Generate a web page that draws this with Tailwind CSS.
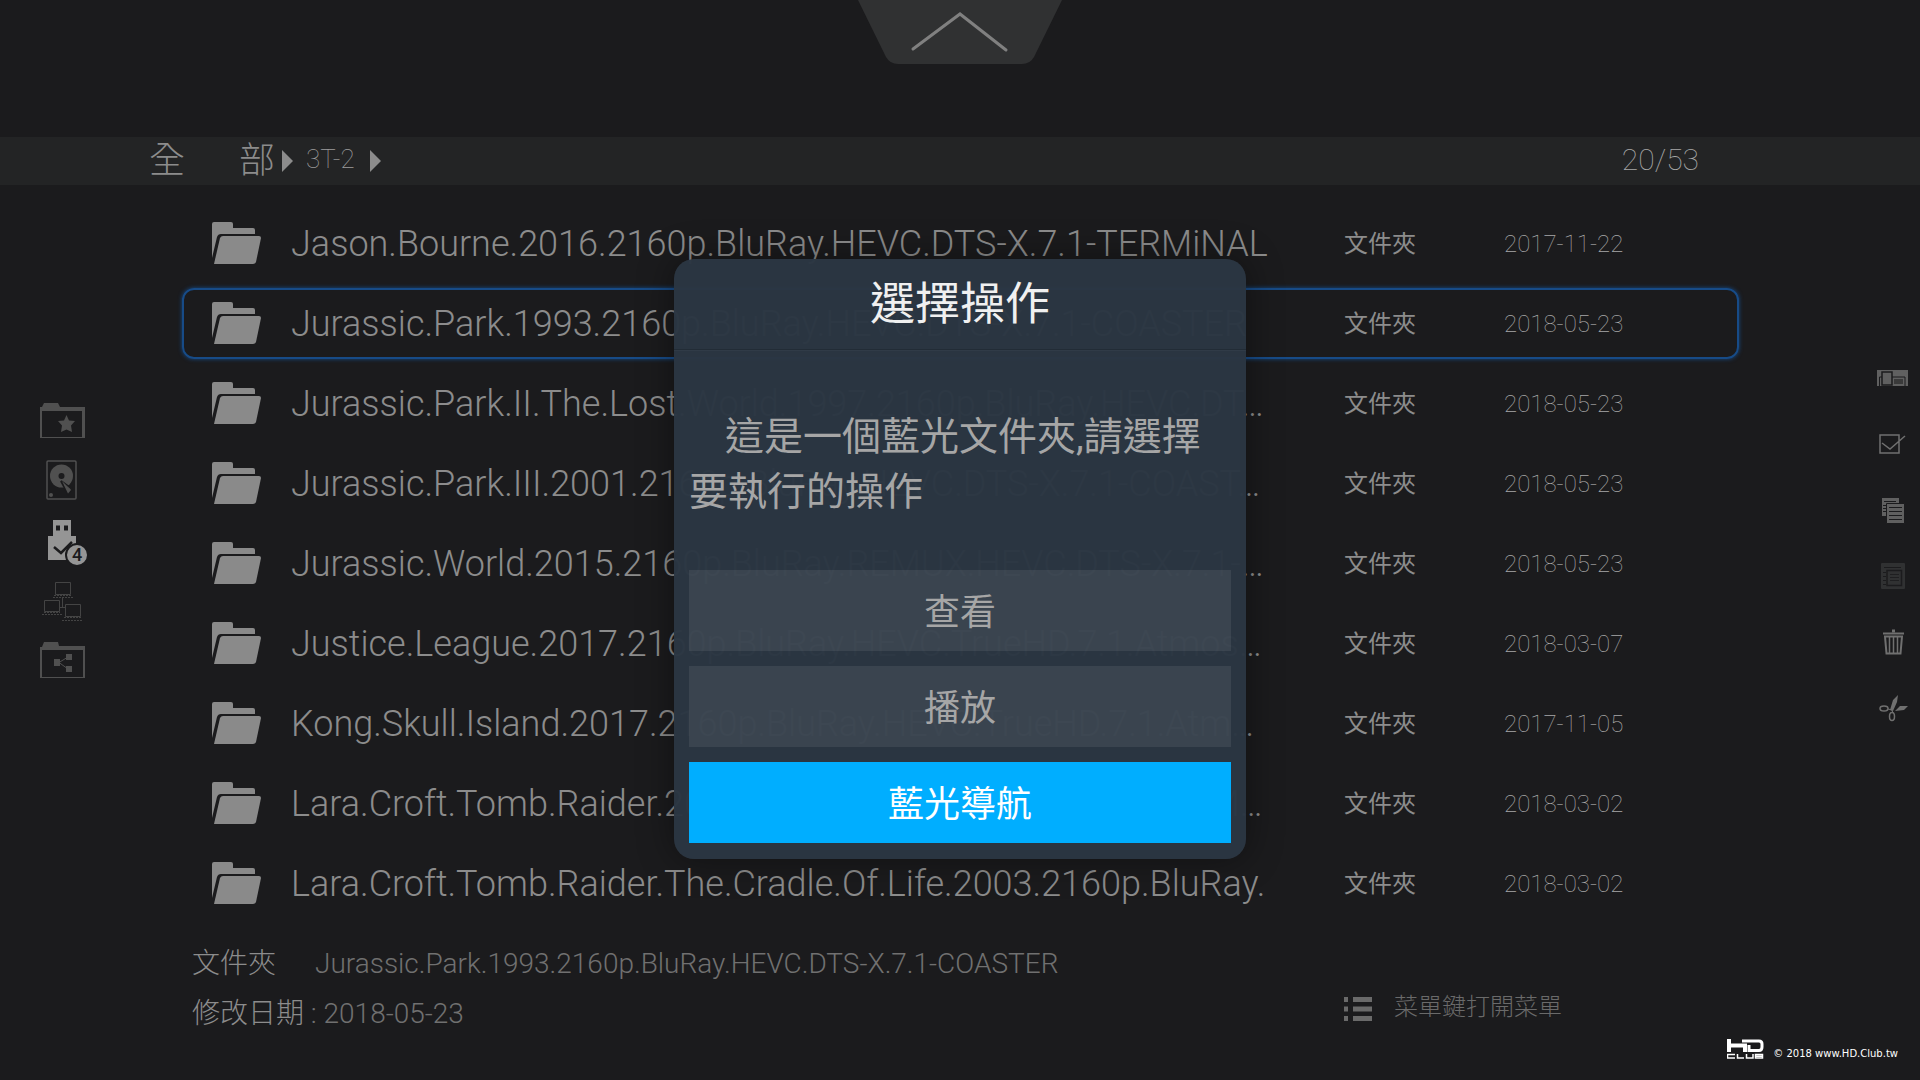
<!DOCTYPE html>
<html lang="zh-Hant">
<head>
    <meta charset="UTF-8">
    <meta name="viewport" content="width=device-width, initial-scale=1.0">
    <title>3T-2</title>
    <script src="https://cdn.jsdelivr.net/npm/@tailwindcss/browser@4"></script>
</head>
<body class="relative min-h-screen overflow-hidden flex flex-col bg-[#1b1b1d] text-[#8c8c8c] font-light font-['Roboto','Noto_Sans_CJK_TC',sans-serif]">
    <!-- Pull-down tab -->
    <header class="h-[137px] flex justify-center items-start">
        <button type="button" aria-label="展開">
            <svg class="block" width="204" height="64" viewBox="0 0 204 64" fill="none">
                <path d="M0 0H204L176 57Q172 64 164 64H40Q32 64 28 57Z" fill="#303132"/>
                <path d="M55 49L102 14L148 50" stroke="#808080" stroke-width="3" stroke-linecap="round"/>
            </svg>
        </button>
    </header>

    <!-- Breadcrumb -->
    <nav class="h-12 pl-[149px] pr-[221px] flex items-center bg-[#232425]">
        <a href="#" class="w-[126px] flex justify-between text-4xl leading-[50px]"><span>全</span><span>部</span></a>
        <svg class="ml-[7px]" width="11" height="22" viewBox="0 0 11 22" fill="#8c8c8c"><path d="M0 0L11 11L0 22Z"/></svg>
        <a href="#" class="ml-[13px] pb-1 text-[26px] font-thin text-[#9c9c9c]">3T-2</a>
        <svg class="ml-[15px]" width="11" height="22" viewBox="0 0 11 22" fill="#8c8c8c"><path d="M0 0L11 11L0 22Z"/></svg>
        <span class="ml-auto pb-1 text-[30px] font-thin text-[#a8a8a8]">20/53</span>
    </nav>

    <!-- File list -->
    <main class="pl-[182px] pr-[181px] pt-[18px]">
        <table class="w-full table-fixed text-left">
            <colgroup>
                <col class="w-[109px]">
                <col>
                <col class="w-[160px]">
                <col class="w-[235px]">
            </colgroup>
            <tbody id="file-list"></tbody>
        </table>
    </main>

    <!-- Details of the selected entry -->
    <footer class="pl-48 pr-[358px] pt-4 flex justify-between text-[28px] leading-[50px]">
        <div>
            <p class="flex"><span class="w-[123px]">文件夾</span><span class="text-[#707070]">Jurassic.Park.1993.2160p.BluRay.HEVC.DTS-X.7.1-COASTER</span></p>
            <p>修改日期<span class="text-[#707070]"> : 2018-05-23</span></p>
        </div>
        <div class="mt-[43px] flex items-center self-start gap-[22px] text-2xl">
            <svg class="mt-1" width="28" height="24" viewBox="0 0 28 24" fill="#6a6a6a"><path d="M0 0h4v5H0zM9 0h19v5H9zM0 9.500h4v5H0zM9 9.500h19v5H9zM0 19h4v5H0zM9 19h19v5H9z"/></svg>
            <span class="leading-[50px] text-[#6a6a6a]">菜單鍵打開菜單</span>
        </div>
    </footer>

    <!-- Sources -->
    <aside class="absolute left-10 top-[402px] w-[46px] flex flex-col gap-5">
        <button type="button" aria-label="收藏">
            <svg class="block" width="46" height="38" viewBox="0 0 46 38"><path d="M0 36V5H2L4 1H18L20 5H45V36Z" fill="#505050"/><path d="M2 9H42V35H2Z" fill="#1b1b1d"/><path d="M26.500 13L29 18.500L35 19L31 23.500L32 30L26.500 27.500L21 30L22 23.500L18 19L24 18.500Z" fill="#505050"/></svg>
        </button>
        <button type="button" aria-label="硬碟">
            <svg class="block ml-1.5" width="32" height="40" viewBox="0 0 32 40"><rect x="1" y="1" width="29" height="38" rx="1" fill="none" stroke="#505050" stroke-width="1.500"/><circle cx="15.500" cy="16" r="11.500" fill="#505050"/><circle cx="15.500" cy="16" r="3" fill="#1b1b1d"/><path d="M15 21L22 34L26 29Z" fill="#505050" stroke="#1b1b1d" stroke-width="2"/><path d="M16 21L22 33.500L25 30Z" fill="#505050"/><circle cx="5" cy="35" r="2" fill="#505050"/></svg>
        </button>
        <button type="button" aria-label="USB" class="relative">
            <svg class="block ml-2 overflow-visible" width="40" height="42" viewBox="0 0 40 42"><path d="M5 0H23V16H28V40H0V16H5Z" fill="#959595"/><path d="M8 5.500h4v5H8zM16 5.500h4v5H16z" fill="#1b1b1d"/><path d="M6 27L13 33L24 22" fill="none" stroke="#1b1b1d" stroke-width="2.500"/><circle cx="29" cy="35" r="11" fill="#959595" stroke="#1b1b1d" stroke-width="2"/></svg>
            <span class="absolute left-[28px] top-[25px] w-[18px] text-center text-lg leading-5 font-medium text-[#1b1b1d]">4</span>
        </button>
        <button type="button" aria-label="網絡">
            <svg class="block" width="46" height="40" viewBox="0 0 46 40" fill="none" stroke="#444444"><path d="M15.500 .500h15v12h-15zM4.500 18.500h15v11h-15zM25.500 22.500h15v12h-15zM22.500 16V25M20 25.500H25"/><path d="M14 13.500h18M13 15.500h20M4 30.500h16M2 32.500h20M24 35.500h17M22 38.500h20" stroke-dasharray="2 1"/></svg>
        </button>
        <button type="button" aria-label="共享">
            <svg class="block" width="46" height="38" viewBox="0 0 46 38"><path d="M0 36V5H2L4 0H18L19 4H45V36Z" fill="#505050"/><path d="M2 8H43V35H2Z" fill="#1b1b1d"/><path d="M14 17h6v7h-6zM26 12h6v6h-6zM26 24h6v6h-6z" fill="#505050"/><path d="M28 15L19 20.500L28 27" fill="none" stroke="#505050"/></svg>
        </button>
    </aside>

    <!-- File actions -->
    <aside class="absolute right-[11px] top-[364px] flex flex-col gap-[38px]">
        <button type="button" aria-label="顯示模式"><svg class="block" width="32" height="28" viewBox="0 0 32 28"><path d="M0 6H31V22H0Z" fill="#606060"/><path d="M2.500 22V13H28V22" fill="none" stroke="#1b1b1d"/><path d="M5 8H15V21H5Z" fill="#606060" stroke="#1b1b1d" stroke-width="1.500"/><path d="M17 15H26V20H17Z" fill="#3a3a3a"/></svg></button>
        <button type="button" aria-label="選擇"><svg class="block" width="32" height="28" viewBox="0 0 32 28" fill="none" stroke="#707070" stroke-width="1.500"><path d="M3 5H22V23H3ZM5 13L13 19L28 6"/></svg></button>
        <button type="button" aria-label="複製"><svg class="block" width="32" height="28" viewBox="0 0 32 28"><path d="M5 2H22V20H5Z" fill="#606060"/><path d="M7 5.500H19M6 9.500H9M6 12.500H9M6 15.500H9" stroke="#1b1b1d"/><path d="M9.500 7.500H27.500V27.500H9.500Z" fill="#606060" stroke="#1b1b1d"/><path d="M12 11.500H25M12 15.500H25M12 19.500H25M12 23.500H25" stroke="#1b1b1d"/></svg></button>
        <button type="button" aria-label="貼上" disabled><svg class="block" width="32" height="28" viewBox="0 0 32 28"><rect x="4" y="1" width="24" height="26" rx="1" fill="#303132"/><path d="M7 5.500H24M6 10.500H9M6 14.500H9M6 18.500H9M6 22.500H9" stroke="#1b1b1d"/><path d="M10 8.500H24.500V23.500H10Z" fill="#303132" stroke="#1b1b1d" stroke-width="1.500"/><path d="M13 12.500H22M13 15.500H22M13 18.500H22" stroke="#1f1f21"/></svg></button>
        <button type="button" aria-label="刪除"><svg class="block" width="32" height="28" viewBox="0 0 32 28" fill="none" stroke="#707070"><path d="M6 5.500H27" stroke-width="2"/><path d="M15 3H18" stroke-width="3"/><path d="M8 8.500H25L23.500 25.500H9.500Z" stroke-width="2"/><path d="M12.500 8V25M16.500 8V25M20.500 8V25" stroke-width="1.500"/></svg></button>
        <button type="button" aria-label="剪下"><svg class="block" width="32" height="28" viewBox="0 0 32 28"><path d="M13 16L16 6L21 1L20 8L16 17ZM18 17L23 12L31 12L27 16Z" fill="#707070"/><ellipse cx="7" cy="14.500" rx="4" ry="2.500" fill="none" stroke="#707070" stroke-width="1.500"/><ellipse cx="15" cy="22.500" rx="2.500" ry="4" fill="none" stroke="#707070" stroke-width="1.500"/><path d="M11 15L15 16L16 19" fill="none" stroke="#707070"/></svg></button>
    </aside>

    <!-- Watermark -->
    <div class="absolute right-[22px] bottom-[21px] flex items-end gap-[9px] text-white">
        <svg width="37" height="20" viewBox="0 0 37 20" fill="none" stroke="#fff"><path d="M2 0V13M2 6.500H18V13" stroke-width="4"/><path d="M15 2H32Q35 2 35 5V8Q35 11.500 32 11.500H22V6" stroke-width="3"/><path d="M8 15.500H.500V19H8M10.500 15V19H17M19.500 15V19H26V15M28.500 15.500H35.500V19H28.500ZM28.500 17.200H36" stroke-width="1.500"/></svg>
        <span class="text-[10px] leading-[10px] font-normal font-['DejaVu_Sans',sans-serif]">© 2018 www.HD.Club.tw</span>
    </div>

    <!-- Operation dialog -->
    <div class="absolute inset-0 flex items-start justify-center pt-[259px]">
        <section role="dialog" aria-labelledby="dialog-title" class="w-[572px] rounded-[20px] bg-[#2b3642]/98 shadow-[0_0_36px_rgba(0,0,0,0.4)] font-normal text-[#a6a6a6]">
            <h1 id="dialog-title" class="h-[91px] border-b border-[#222c36] text-center text-[45px] leading-[92px] font-normal text-[#f0f0f0]">選擇操作</h1>
            <p class="h-[220px] px-[15px] pt-[59px] border-t border-[#303b47] indent-[36px] text-[39px] leading-[55px]">這是一個藍光文件夾,請選擇要執行的操作</p>
            <div class="px-[15px] pb-4 flex flex-col gap-[15px] text-4xl">
                <button type="button" class="h-[81px] pt-1 bg-white/8">查看</button>
                <button type="button" class="h-[81px] pt-1 bg-white/8">播放</button>
                <button type="button" class="h-[81px] pt-1 bg-[#00aeff] text-white">藍光導航</button>
            </div>
        </section>
    </div>

    <script>
        const files = [
            { name: 'Jason.Bourne.2016.2160p.BluRay.HEVC.DTS-X.7.1-TERMiNAL', date: '2017-11-22' },
            { name: 'Jurassic.Park.1993.2160p.BluRay.HEVC.DTS-X.7.1-COASTER', date: '2018-05-23', selected: true },
            { name: 'Jurassic.Park.II.The.Lost.World.1997.2160p.BluRay.HEVC.DT…', date: '2018-05-23' },
            { name: 'Jurassic.Park.III.2001.2160p.BluRay.HEVC.DTS-X.7.1-COAST…', date: '2018-05-23' },
            { name: 'Jurassic.World.2015.2160p.BluRay.REMUX.HEVC.DTS-X.7.1-…', date: '2018-05-23' },
            { name: 'Justice.League.2017.2160p.BluRay.HEVC.TrueHD.7.1.Atmos…', date: '2018-03-07' },
            { name: 'Kong.Skull.Island.2017.2160p.BluRay.HEVC.TrueHD.7.1.Atm…', date: '2017-11-05' },
            { name: 'Lara.Croft.Tomb.Raider.2001.2160p.BluRay.HEVC.DTS-HD.M…', date: '2018-03-02' },
            { name: 'Lara.Croft.Tomb.Raider.The.Cradle.Of.Life.2003.2160p.BluRay.', date: '2018-03-02' },
        ];
        const list = document.getElementById('file-list');
        files.forEach(file => {
            const row = document.createElement('tr');
            row.className = 'h-20 relative';
            // Focus frame spans the whole row
            const frame = file.selected
                ? 'pl-[30px] after:absolute after:inset-x-0 after:top-[5px] after:bottom-1 after:rounded-xl after:border-2 after:border-[#174b87] after:shadow-[0_0_4px_#174b87]'
                : 'pl-[30px]';
            row.innerHTML = `
                <td class="${frame}"><svg class="block" width="50" height="42" viewBox="0 0 50 42" fill="#8a8a8a"><path d="M0 36V2Q0 0 2 0H19Q21 0 21 2V6H41Q43 6 43 8V12H9Q6 12 5 15Z"/><path d="M2 42L8 16Q9 14 11 14H47Q49 14 49 16L44 40Q43 42 41 42Z"/></svg></td>
                <td class="whitespace-nowrap pt-0.5 text-4xl">${file.name}</td>
                <td class="pt-0.5 text-2xl font-normal">文件夾</td>
                <td class="pt-0.5 text-2xl font-thin text-[#a8a8a8]">${file.date}</td>
            `;
            list.appendChild(row);
        });
    </script>
</body>
</html>
